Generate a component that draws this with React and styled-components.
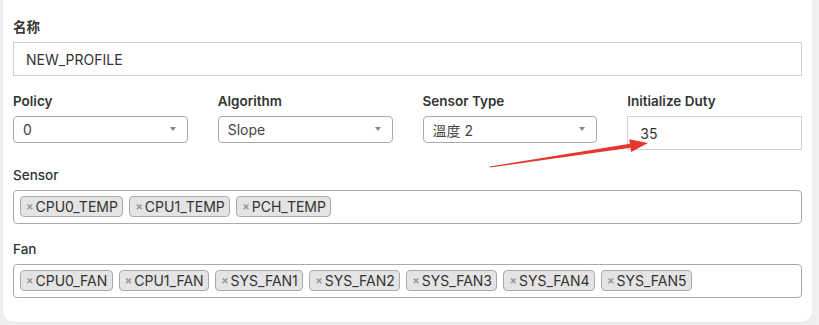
import React from "react";
import styled, { createGlobalStyle } from "styled-components";

const GlobalStyle = createGlobalStyle`
  html, body { margin: 0; padding: 0; background: #efefef; }
  body { font-family: Inter, "Noto Sans CJK SC", "Noto Sans CJK TC", sans-serif; color: #333; }
  * { box-sizing: border-box; }
`;

const Page = styled.div`
  position: relative;
  width: 819px;
  height: 325px;
  padding: 0 7px 4px 3px;
  background: #efefef;
  overflow: hidden;
`;

const Card = styled.div`
  background: #fff;
  border-radius: 0 0 10px 10px;
  padding: 19px 10px 24px 10px;
  box-shadow: 0 1px 2px rgba(0, 0, 0, 0.04);
`;

const Group = styled.div`
  margin-bottom: ${(p) => (p.$last ? 0 : "17px")};
`;

const Label = styled.div`
  font-size: 13.5px;
  font-weight: ${(p) => (p.$light ? 500 : 600)};
  line-height: 16px;
  height: 16px;
  color: #333;
  margin-bottom: 7px;
  white-space: nowrap;
`;

const TextInput = styled.div`
  height: 34px;
  border: 1px solid #cfcfcf;
  padding: 0 12px;
  display: flex;
  align-items: center;
  font-size: 14px;
  color: #333;
`;

const Row = styled.div`
  display: grid;
  grid-template-columns: repeat(4, 1fr);
  column-gap: 30px;
  align-items: start;
  margin-bottom: 17px;
`;

const Select = styled.div`
  height: 27px;
  border: 1px solid #aaa;
  border-radius: 4px;
  padding: 0 9px;
  display: flex;
  align-items: center;
  justify-content: space-between;
  font-size: 14px;
  color: #444;
`;

const Caret = styled.span`
  width: 0;
  height: 0;
  border-style: solid;
  border-width: 4px 3.5px 0 3.5px;
  border-color: #888 transparent transparent transparent;
  margin-right: 2px;
  margin-top: -1px;
`;

const MultiBox = styled.div`
  min-height: 34px;
  border: 1px solid #aaa;
  border-radius: 4px;
  padding: 5px 6px;
  display: flex;
  flex-wrap: wrap;
  gap: 6px;
`;

const Tag = styled.span`
  height: 21px;
  display: inline-flex;
  align-items: center;
  background: #e4e4e4;
  border: 1px solid #aaa;
  border-radius: 4px;
  padding: 0 4.5px 0 5px;
  font-size: 14px;
  color: #333;
  white-space: nowrap;
`;

const TagX = styled.span`
  color: #999;
  font-size: 11px;
  font-weight: 700;
  margin-right: 2px;
  line-height: 1;
`;

const Overlay = styled.svg`
  position: absolute;
  left: 0;
  top: 0;
  pointer-events: none;
`;

const sensors = ["CPU0_TEMP", "CPU1_TEMP", "PCH_TEMP"];
const fans = ["CPU0_FAN", "CPU1_FAN", "SYS_FAN1", "SYS_FAN2", "SYS_FAN3", "SYS_FAN4", "SYS_FAN5"];

const selects = [
  { label: "Policy", value: "0" },
  { label: "Algorithm", value: "Slope" },
  { label: "Sensor Type", value: "溫度 2" },
];

export default function App() {
  return (
    <>
      <GlobalStyle />
      <Page>
        <Card>
          <Group>
            <Label>名称</Label>
            <TextInput>NEW_PROFILE</TextInput>
          </Group>
          <Row>
            {selects.map((s) => (
              <div key={s.label}>
                <Label>{s.label}</Label>
                <Select>
                  <span>{s.value}</span>
                  <Caret />
                </Select>
              </div>
            ))}
            <div>
              <Label>Initialize Duty</Label>
              <TextInput>35</TextInput>
            </div>
          </Row>
          <Group>
            <Label $light>Sensor</Label>
            <MultiBox>
              {sensors.map((s) => (
                <Tag key={s}>
                  <TagX>×</TagX>
                  {s}
                </Tag>
              ))}
            </MultiBox>
          </Group>
          <Group $last>
            <Label $light>Fan</Label>
            <MultiBox>
              {fans.map((s) => (
                <Tag key={s}>
                  <TagX>×</TagX>
                  {s}
                </Tag>
              ))}
            </MultiBox>
          </Group>
        </Card>
        <Overlay width="819" height="325" viewBox="0 0 819 325">
          <polygon
            fill="#e8352d"
            points="489.9,166.4 629.9,143.7 629.2,139.3 648,143 631.2,152.1 630.5,147.7 490.1,167.6"
          />
        </Overlay>
      </Page>
    </>
  );
}
